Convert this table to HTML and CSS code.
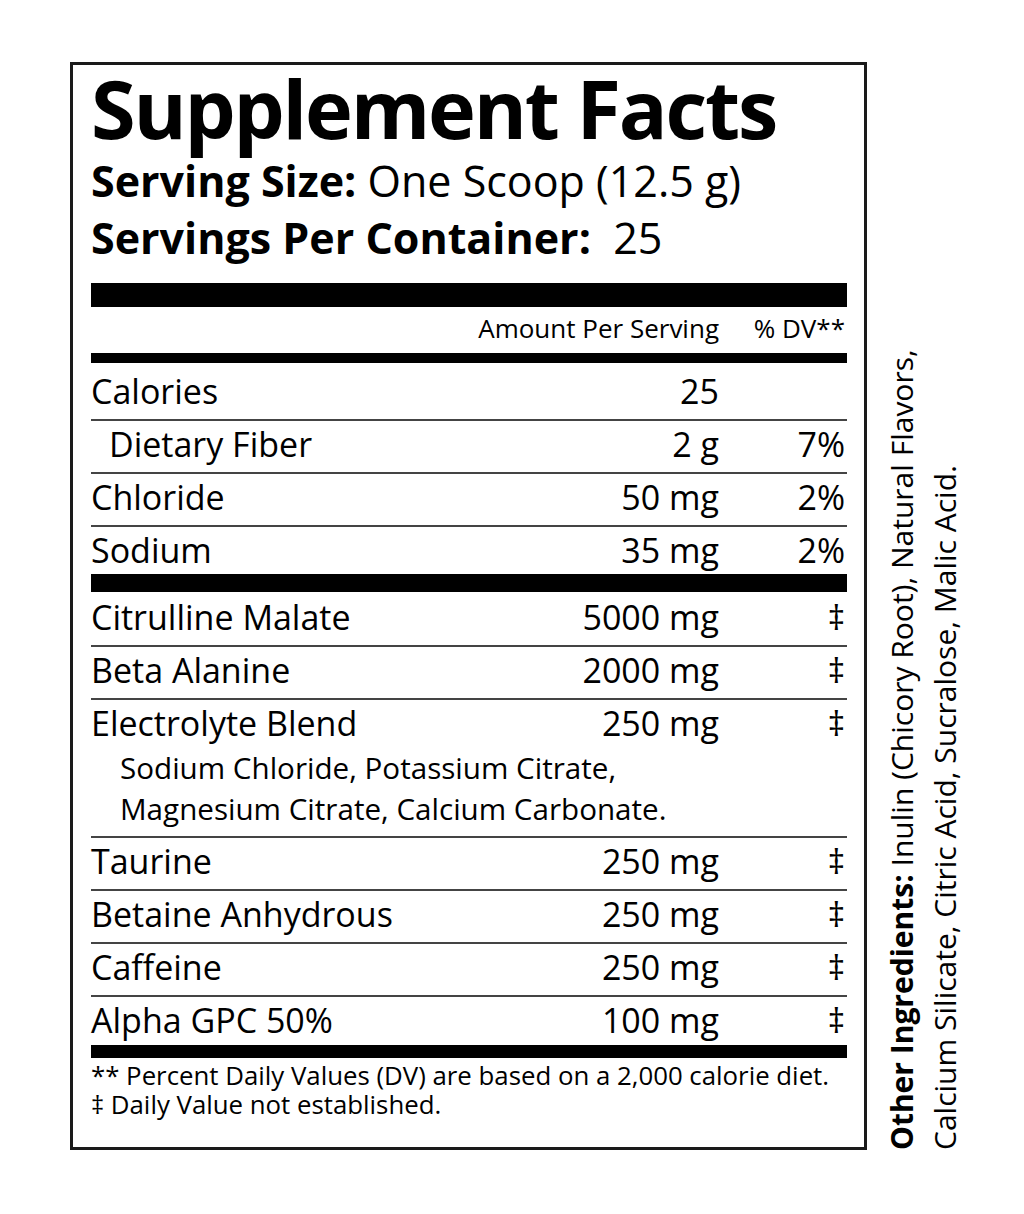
FILE: index.html
```html
<!DOCTYPE html>
<html lang="en">
<head>
<meta charset="utf-8">
<title>Supplement Facts</title>
<link rel="stylesheet" href="styles.css">
</head>
<body>
<div class="page">
  <div class="label">
    <h1 class="title">Supplement Facts</h1>
    <p class="serving"><b>Serving Size:</b> One Scoop (12.5 g)</p>
    <p class="serving"><b>Servings Per Container:</b>&nbsp; 25</p>
    <div class="bar bar-xl"></div>
    <div class="head">
      <span class="amt">Amount Per Serving</span>
      <span class="dv">% DV**</span>
    </div>
    <div class="bar bar-s"></div>
    <div class="row first"><span class="name">Calories</span><span class="amt">25</span><span class="dv"></span></div>
    <div class="row"><span class="name indent">Dietary Fiber</span><span class="amt">2 g</span><span class="dv">7%</span></div>
    <div class="row"><span class="name">Chloride</span><span class="amt">50 mg</span><span class="dv">2%</span></div>
    <div class="row last"><span class="name">Sodium</span><span class="amt">35 mg</span><span class="dv">2%</span></div>
    <div class="bar bar-m"></div>
    <div class="row sec"><span class="name">Citrulline Malate</span><span class="amt">5000 mg</span><span class="dv">‡</span></div>
    <div class="row"><span class="name">Beta Alanine</span><span class="amt">2000 mg</span><span class="dv">‡</span></div>
    <div class="row blend"><span class="name">Electrolyte Blend</span><span class="amt">250 mg</span><span class="dv">‡</span>
      <span class="sub">Sodium Chloride, Potassium Citrate,<br>Magnesium Citrate, Calcium Carbonate.</span>
    </div>
    <div class="row"><span class="name">Taurine</span><span class="amt">250 mg</span><span class="dv">‡</span></div>
    <div class="row"><span class="name">Betaine Anhydrous</span><span class="amt">250 mg</span><span class="dv">‡</span></div>
    <div class="row"><span class="name">Caffeine</span><span class="amt">250 mg</span><span class="dv">‡</span></div>
    <div class="row last end"><span class="name">Alpha GPC 50%</span><span class="amt">100 mg</span><span class="dv">‡</span></div>
    <div class="bar bar-b"></div>
    <p class="foot">** Percent Daily Values (DV) are based on a 2,000 calorie diet.<br>‡ Daily Value not established.</p>
  </div>
  <div class="side">
    <p class="other"><b>Other Ingredients:</b> Inulin (Chicory Root), Natural Flavors,<br>Calcium Silicate, Citric Acid, Sucralose, Malic Acid.</p>
  </div>
</div>
</body>
</html>
```
FILE: styles.css
```css
* { box-sizing: border-box; }
html, body {
  margin: 0;
  padding: 0;
  background: #fff;
}
body {
  width: 1024px;
  height: 1214px;
  font-family: "Open Sans", "Noto Sans", "DejaVu Sans", sans-serif;
  color: #000;
  overflow: hidden;
}
.page {
  display: flex;
  align-items: stretch;
  padding-top: 62px;
  padding-left: 70px;
}
.label {
  width: 797px;
  height: 1088px;
  border: 3px solid #1a1a1a;
  padding: 1px 17px 0 18px;
  display: flex;
  flex-direction: column;
}
.title {
  margin: 0;
  font-size: 81px;
  line-height: 84px;
  font-weight: 700;
  letter-spacing: -2.2px;
}
.serving {
  margin: 0;
  font-size: 43px;
  line-height: 57px;
  font-weight: 400;
}
.serving:first-of-type { margin-top: 2px; }
.serving b { font-weight: 700; }
.bar { background: #000; width: 100%; }
.bar-xl { height: 24px; margin-top: 17px; }
.bar-s { height: 10px; margin-top: 4px; }
.bar-m { height: 18px; }
.bar-b { height: 13px; }

.head {
  display: grid;
  grid-template-columns: 1fr 128px;
  font-size: 26px;
  line-height: 42px;
}
.head .amt { text-align: right; }
.head .dv { text-align: right; padding-right: 2px; }

.row {
  display: grid;
  grid-template-columns: 1fr auto 128px;
  font-size: 34px;
  line-height: 47px;
  padding-bottom: 4px;
  border-bottom: 2px solid #444;
}
.row.first { padding-top: 5px; }
.row.last { border-bottom: 0; padding-bottom: 0; }
.row.end { padding-bottom: 1px; }
.row.sec { margin-top: 2px; }
.row .amt { text-align: right; }
.row .dv { text-align: right; padding-right: 2px; }
.indent { padding-left: 18px; }
.row.blend { padding-bottom: 7px; }
.sub {
  grid-column: 1 / -1;
  padding-left: 29px;
  font-size: 29.6px;
  line-height: 41px;
}
.foot {
  margin: 3px 0 0;
  font-size: 25.8px;
  line-height: 29px;
}
.side {
  margin-left: 13px;
  height: 1088px;
  writing-mode: vertical-rl;
  transform: rotate(180deg);
}
.other {
  margin: 0;
  font-size: 30px;
  line-height: 43px;
  white-space: nowrap;
}
.other b { font-weight: 700; }
```
